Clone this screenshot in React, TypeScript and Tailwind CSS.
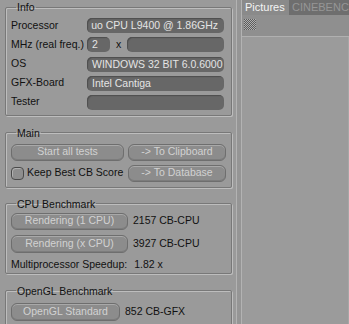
import type { ReactNode } from "react";

type GroupProps = {
  title: string;
  className?: string;
  children: ReactNode;
};

function Group({ title, className = "", children }: GroupProps) {
  return (
    <fieldset
      className={`rounded-[2px] border border-[#787878] px-[5px] shadow-[1px_1px_0_#bdbdbd,inset_1px_1px_0_#bdbdbd] ${className}`}
    >
      <legend className="ml-[5px] px-[1px] leading-[14px] text-[#111]">{title}</legend>
      {children}
    </fieldset>
  );
}

function Field({ children, className = "" }: { children?: ReactNode; className?: string }) {
  return (
    <div
      className={`flex h-[15px] items-center overflow-hidden whitespace-nowrap rounded-[5px] bg-[#676767] leading-[15px] text-[#e4e4e4] shadow-[inset_1px_1px_1px_#4e4e4e] ${className}`}
    >
      {children}
    </div>
  );
}

function Button({ label, className = "" }: { label: string; className?: string }) {
  return (
    <button
      type="button"
      className={`flex items-center justify-center rounded-[6px] border border-[#6e6e6e] bg-[#8c8c8c] text-[#d2d2d2] shadow-[inset_0_1px_0_#a9a9a9,inset_0_-1px_0_#7c7c7c] ${className}`}
    >
      {label}
    </button>
  );
}

function HatchIcon() {
  return (
    <svg width="12" height="11" viewBox="0 0 12 11">
      <defs>
        <pattern id="hatch" width="2" height="2" patternUnits="userSpaceOnUse">
          <rect width="1" height="1" fill="#5c5c5c" />
          <rect x="1" y="1" width="1" height="1" fill="#5c5c5c" />
        </pattern>
      </defs>
      <rect width="12" height="11" fill="#b0b0b0" />
      <rect width="12" height="11" fill="url(#hatch)" />
    </svg>
  );
}

export default function App() {
  const rows: { label: string; field: ReactNode }[] = [
    {
      label: "Processor",
      field: (
        <Field className="pl-[4px] pr-[6px]">
          <div className="flex min-w-0 flex-1 justify-end overflow-hidden">
            <span className="shrink-0">Intel(R) Core(TM)2 Duo CPU L9400 @ 1.86GHz</span>
          </div>
        </Field>
      ),
    },
    {
      label: "MHz (real freq.)",
      field: (
        <div className="flex items-center">
          <Field className="w-[23px] pl-[5px]">2</Field>
          <span className="w-[17px] pl-[6px] text-[#111]">x</span>
          <Field className="flex-1" />
        </div>
      ),
    },
    { label: "OS", field: <Field className="pl-[5px]">WINDOWS 32 BIT 6.0.6000</Field> },
    { label: "GFX-Board", field: <Field className="pl-[5px]">Intel Cantiga</Field> },
    { label: "Tester", field: <Field /> },
  ];

  return (
    <div className="flex h-[324px] w-[349px] overflow-hidden bg-[#9a9a9a] font-['Liberation_Sans',Arial,sans-serif] text-[10.5px] text-[#111]">
      <div className="w-[236px] shrink-0 pl-[5px] pr-[4px]">
        <Group title="Info" className="pb-[5px]">
          <div className="mt-[4px] grid grid-cols-[76px_1fr] gap-y-[4px] pr-[2px]">
            {rows.map((row) => (
              <div key={row.label} className="contents">
                <div className="flex h-[15px] items-center">{row.label}</div>
                {row.field}
              </div>
            ))}
          </div>
        </Group>

        <Group title="Main" className="mt-[10px] pb-[5px]">
          <div className="mt-[4px] grid grid-cols-[113px_1fr] gap-x-[4px] gap-y-[4px]">
            <Button label="Start all tests" className="h-[17px]" />
            <Button label="-> To Clipboard" className="h-[17px]" />
            <label className="flex h-[17px] items-center gap-[3px] whitespace-nowrap">
              <span className="h-[13px] w-[13px] rounded-[4px] border border-[#4a4a4a] bg-[#8e8e8e] shadow-[inset_1px_1px_0_#b0b0b0]" />
              Keep Best CB Score
            </label>
            <Button label="-> To Database" className="h-[17px]" />
          </div>
        </Group>

        <Group title="CPU Benchmark" className="mt-[9px] pb-[1px]">
          <div className="mt-[2px] flex flex-col gap-[5px]">
            <div className="flex items-center gap-[5px]">
              <Button label="Rendering (1 CPU)" className="h-[17px] w-[117px]" />
              <span>2157 CB-CPU</span>
            </div>
            <div className="flex items-center gap-[5px]">
              <Button label="Rendering (x CPU)" className="h-[18px] w-[117px]" />
              <span>3927 CB-CPU</span>
            </div>
            <div className="flex h-[14px] items-center">
              <span>Multiprocessor Speedup:</span>
              <span className="ml-[7px]">1.82 x</span>
            </div>
          </div>
        </Group>

        <Group title="OpenGL Benchmark" className="mt-[10px] pb-[5px]">
          <div className="mt-[5px] flex items-center gap-[5px]">
            <Button label="OpenGL Standard" className="h-[18px] w-[109px]" />
            <span>852 CB-GFX</span>
          </div>
        </Group>
      </div>

      <div className="w-[6px] shrink-0 border-l border-r border-[#b3b3b3] bg-[#959595]" />

      <div className="flex min-w-0 flex-1 flex-col bg-[#9b9b9b]">
        <div className="flex h-[15px] shrink-0 overflow-hidden whitespace-nowrap text-[11px] leading-[15px]">
          <div className="w-[47px] shrink-0 bg-[#8a8a8a] pl-[3px] text-[#f4f4f4]">Pictures</div>
          <div className="flex-1 bg-[#6e6e6e] pl-[3px] text-[#969696]">CINEBENCH</div>
        </div>
        <div className="flex h-[22px] shrink-0 items-start border-b border-[#b0b0b0] bg-[#8f8f8f] pl-[2px] pt-[4px]">
          <HatchIcon />
        </div>
        <div className="flex-1 border-r border-[#a6a6a6]" />
      </div>
    </div>
  );
}
